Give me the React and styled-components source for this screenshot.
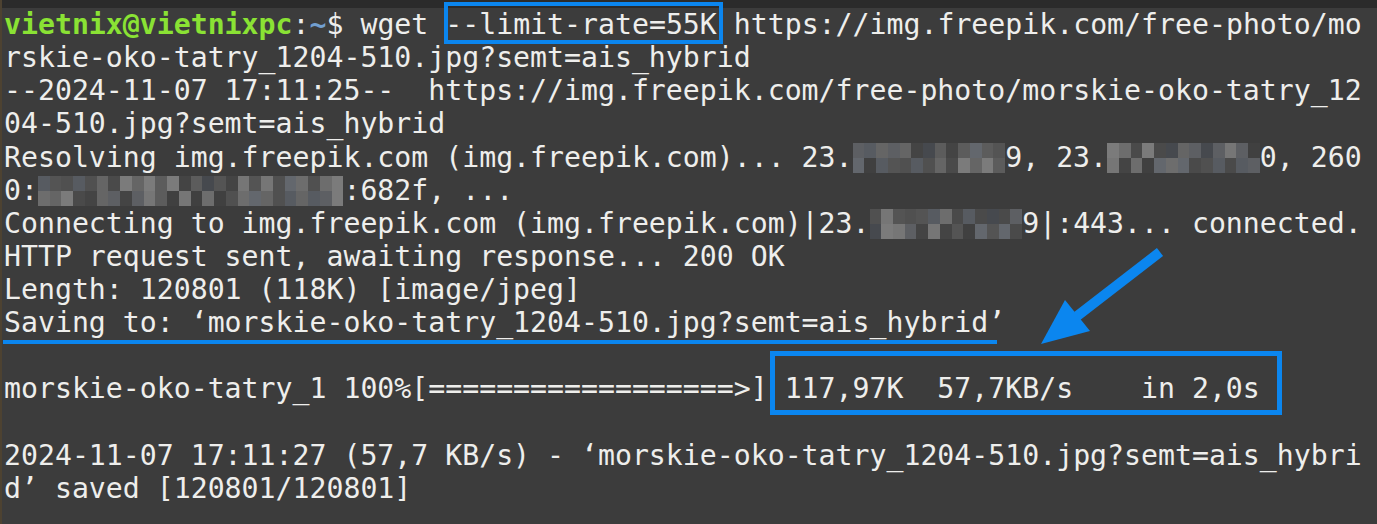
import styled, { createGlobalStyle } from 'styled-components';

const LINE_H = '33.14px';
const ACCENT = '#0b86ef';

const GlobalStyle = createGlobalStyle`
    html, body {
        margin: 0;
        padding: 0;
        background: #3c3c3c;
    }
`

const Window = styled.div`
    position: relative;
    width: 1377px;
    height: 524px;
    overflow: hidden;
    background: #3c3c3c;
    border-left: 2px solid #4d4231;
    box-sizing: border-box;
`

const TitleStrip = styled.div`
    height: 8px;
    background: #2b2b2b;
`

const Screen = styled.div`
    padding-left: 2px;
    font-family: "DejaVu Sans Mono", "Liberation Mono", monospace;
    font-size: 28.2px;
    color: #eeeeec;
`

const Line = styled.div`
    height: ${LINE_H};
    line-height: ${LINE_H};
    white-space: pre;
`

const User = styled.span`
    color: #8ae234;
    font-weight: bold;
`

const Path = styled.span`
    color: #729fcf;
    font-weight: bold;
`

const Boxed = styled.span`
    position: relative;

    &::after {
        content: '';
        position: absolute;
        top: ${p => p.$t}px;
        bottom: ${p => p.$b}px;
        left: ${p => p.$l}px;
        right: ${p => p.$r}px;
        border: ${p => p.$w}px solid ${ACCENT};
    }
`

const Underlined = styled.span`
    position: relative;

    &::after {
        content: '';
        position: absolute;
        top: calc(100% + 1px);
        left: -1px;
        right: 8px;
        height: 4px;
        background: ${ACCENT};
    }
`

const MosaicBox = styled.span`
    display: inline-grid;
    vertical-align: top;
    margin-top: 2px;
    height: 30px;
    width: ${p => p.$chars}ch;
    grid-template-columns: repeat(${p => p.$cols}, 1fr);
    grid-template-rows: 1fr 1fr;
`

const Cell = styled.span`
    background: ${p => p.$c};
`

const Arrow = styled.svg`
    position: absolute;
    left: -2px;
    top: 0;
    pointer-events: none;
`

// muted greys of a pixelated IP address
const SHADES = ['#4a4a4a', '#545454', '#5c5c5c', '#656565', '#6d6d6d', '#767676',
    '#46494e', '#575b61', '#63676d', '#444444', '#7b7b7b', '#505050', '#404040', '#5d5f63'];

function Mosaic({ chars, seed }) {
    const cols = Math.round(chars * 17 / 12);
    const cells = [];
    for (let i = 0; i < cols * 2; i++) {
        const k = (i * 7 + seed * 13 + (i * i) % 5 + Math.floor(i / 3) * 3) % SHADES.length;
        cells.push(<Cell key={i} $c={SHADES[k]} />);
    }
    return <MosaicBox $chars={chars} $cols={cols}>{cells}</MosaicBox>;
}

function App() {
    return (
        <Window>
            <GlobalStyle />
            <TitleStrip />
            <Screen>
                <Line>
                    <User>vietnix@vietnixpc</User>:<Path>~</Path>$ wget <Boxed $t={-6} $b={-3} $l={-1} $r={-6} $w={4}>--limit-rate=55K</Boxed> https://img.freepik.com/free-photo/mo
                </Line>
                <Line>rskie-oko-tatry_1204-510.jpg?semt=ais_hybrid</Line>
                <Line>--2024-11-07 17:11:25--  https://img.freepik.com/free-photo/morskie-oko-tatry_12</Line>
                <Line>04-510.jpg?semt=ais_hybrid</Line>
                <Line>
                    Resolving img.freepik.com (img.freepik.com)... 23.<Mosaic chars={9} seed={1} />9, 23.<Mosaic chars={9} seed={4} />0, 260
                </Line>
                <Line>
                    0:<Mosaic chars={18} seed={7} />:682f, ...
                </Line>
                <Line>
                    Connecting to img.freepik.com (img.freepik.com)|23.<Mosaic chars={9} seed={3} />9|:443... connected.
                </Line>
                <Line>HTTP request sent, awaiting response... 200 OK</Line>
                <Line>Length: 120801 (118K) [image/jpeg]</Line>
                <Line>
                    <Underlined>Saving to: ‘morskie-oko-tatry_1204-510.jpg?semt=ais_hybrid’</Underlined>
                </Line>
                <Line />
                <Line>
                    morskie-oko-tatry_1 100%[==================&gt;] <Boxed $t={-21} $b={-10} $l={-15} $r={-22} $w={5}>117,97K  57,7KB/s    in 2,0s</Boxed>
                </Line>
                <Line />
                <Line>2024-11-07 17:11:27 (57,7 KB/s) - ‘morskie-oko-tatry_1204-510.jpg?semt=ais_hybri</Line>
                <Line>d’ saved [120801/120801]</Line>
            </Screen>
            <Arrow width="1377" height="524" viewBox="0 0 1377 524">
                <line x1="1160" y1="252" x2="1072" y2="320" stroke={ACCENT} strokeWidth="10" />
                <polygon points="1041,344 1065,300 1090,331" fill={ACCENT} />
            </Arrow>
        </Window>
    );
}

export default App;
